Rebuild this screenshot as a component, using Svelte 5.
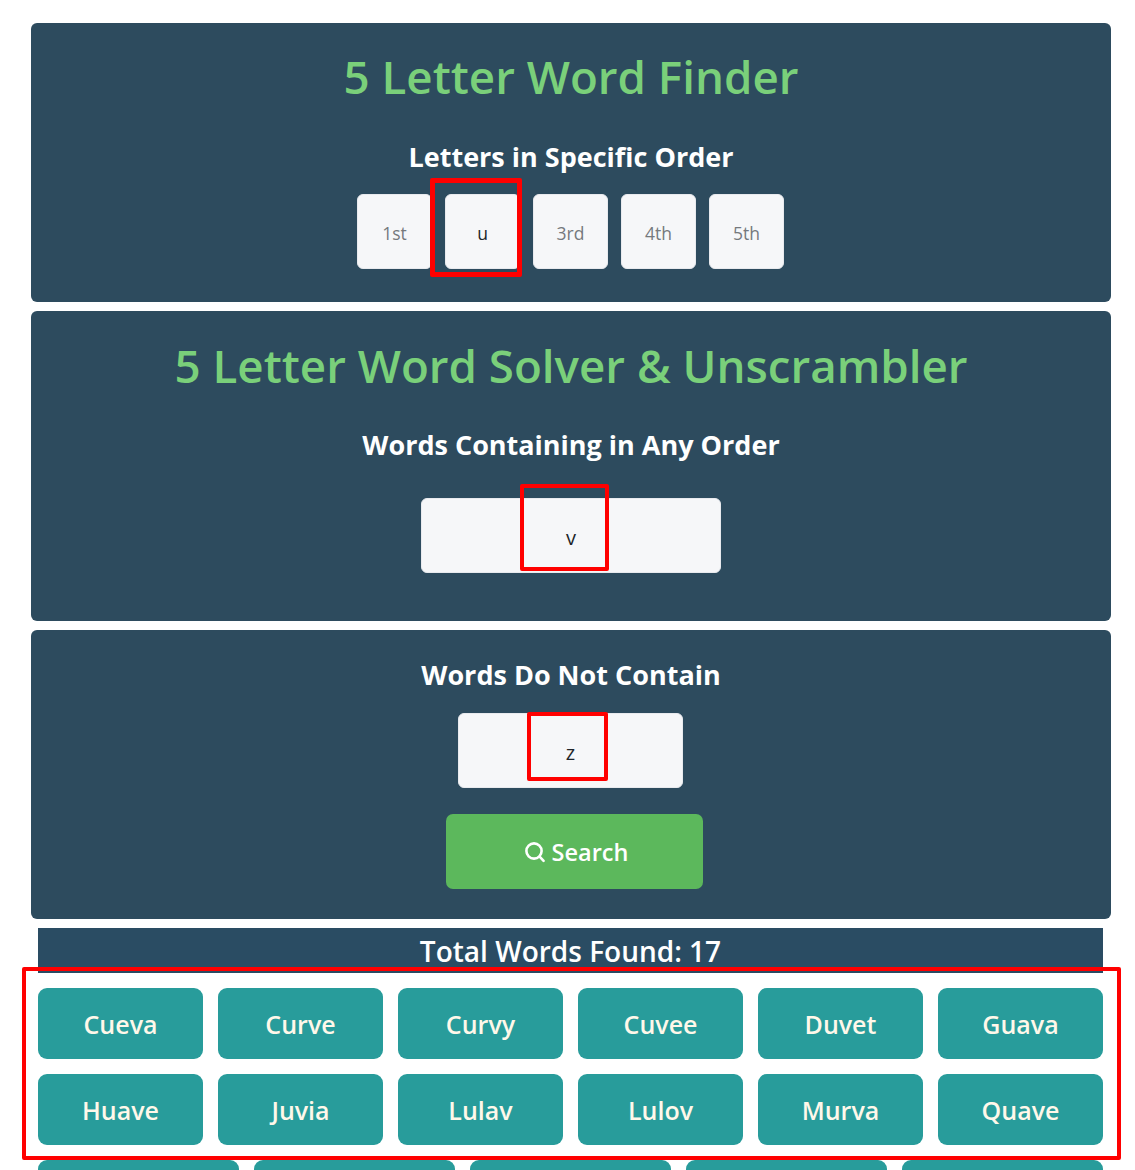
<script>
  const order = [
    { placeholder: "1st", value: "" },
    { placeholder: "2nd", value: "u" },
    { placeholder: "3rd", value: "" },
    { placeholder: "4th", value: "" },
    { placeholder: "5th", value: "" },
  ];
  const found = ["Cueva", "Curve", "Curvy", "Cuvee", "Duvet", "Guava", "Huave", "Juvia", "Lulav", "Lulov", "Murva", "Quave"];
  // third row is cut by the window, only the tile tops show
  const cut = [1, 2, 3, 4, 5];
</script>

<div class="page">
  <section class="panel first">
    <h1>5 Letter Word Finder</h1>
    <h2>Letters in Specific Order</h2>
    <div class="letters">
      {#each order as o}
        <input class="box" placeholder={o.placeholder} value={o.value} />
      {/each}
    </div>
  </section>

  <section class="panel second">
    <h1>5 Letter Word Solver &amp; Unscrambler</h1>
    <h2>Words Containing in Any Order</h2>
    <input class="box wide" value="v" />
  </section>

  <section class="panel third">
    <h2>Words Do Not Contain</h2>
    <input class="box mid" value="z" />
    <button class="search">
      <svg width="22" height="22" viewBox="0 0 22 22" fill="none" stroke="currentColor" stroke-width="2.6" stroke-linecap="round">
        <circle cx="10" cy="10" r="7.6" />
        <path d="M15.6 15.6L19.6 19.8" />
      </svg>
      Search
    </button>
  </section>

  <div class="total">Total Words Found: 17</div>

  <div class="words">
    {#each found as w}
      <a class="word" href="#top">{w}</a>
    {/each}
  </div>
  <div class="words five">
    {#each cut as n (n)}
      <span class="word"></span>
    {/each}
  </div>

  <div class="mark m1"></div>
  <div class="mark m2"></div>
  <div class="mark m3"></div>
  <div class="mark m4"></div>
</div>

<style>
  :global(body) {
    margin: 0;
    background: #fff;
  }

  .page {
    position: relative;
    height: 1170px;
    overflow: hidden;
    padding: 23px 24px 0 31px;
    box-sizing: border-box;
    font-family: "Open Sans", "Noto Sans", sans-serif;
  }

  .panel {
    background: #2d4b5e;
    border-radius: 6px;
    margin-bottom: 9px;
    display: flex;
    flex-direction: column;
    align-items: center;
    box-sizing: border-box;
  }

  .first {
    height: 279px;
    padding-top: 20px;
  }

  .second {
    height: 310px;
    padding-top: 21px;
  }

  .third {
    height: 289px;
    padding-top: 26px;
  }

  h1 {
    margin: 0;
    color: #7ad07a;
    font-size: 45.7px;
    line-height: 66px;
    font-weight: 600;
  }

  h2 {
    margin: 0;
    color: #fff;
    font-size: 27px;
    line-height: 38px;
    font-weight: 700;
  }

  .first h2 {
    margin-top: 29px;
  }

  .second h2 {
    margin-top: 28px;
  }

  .letters {
    display: flex;
    gap: 13px;
    margin: 18px 1px 0 0;
  }

  .box {
    width: 75px;
    height: 75px;
    box-sizing: border-box;
    border: 1px solid #e8eaee;
    border-radius: 6px;
    background: #f6f7f9;
    padding: 3px 0 0;
    text-align: center;
    font-family: inherit;
    font-size: 17.5px;
    color: #212529;
  }

  .box::placeholder {
    color: #75797d;
    opacity: 1;
  }

  .wide {
    width: 300px;
    margin-top: 34px;
    padding-top: 3px;
    font-size: 20px;
  }

  .mid {
    width: 225px;
    margin: 19px 1px 0 0;
    padding-top: 4px;
    font-size: 20px;
  }

  .search {
    width: 257px;
    height: 75px;
    margin: 26px 0 0 6px;
    border: none;
    border-radius: 7px;
    background: #5cb85c;
    color: #fff;
    font-family: inherit;
    font-size: 23.5px;
    font-weight: 600;
    display: flex;
    align-items: center;
    justify-content: center;
    gap: 6px;
    padding: 0 0 0 4px;
  }

  .total {
    margin: 0 8px 0 7px;
    height: 45px;
    background: #2a4c63;
    color: #fff;
    text-align: center;
    font-size: 28px;
    line-height: 47px;
    font-weight: 600;
  }

  .words {
    display: grid;
    grid-template-columns: repeat(6, 165px);
    gap: 15px;
    margin: 15px 8px 0 7px;
  }

  .five {
    grid-template-columns: repeat(5, 201px);
  }

  .word {
    height: 71px;
    border-radius: 9px;
    background: #289c9b;
    color: #fff8ea;
    text-decoration: none;
    font-size: 25px;
    font-weight: 600;
    display: flex;
    align-items: center;
    justify-content: center;
  }

  /* red annotations drawn over the page */
  .mark {
    position: absolute;
    box-sizing: border-box;
    border: 4px solid #f00;
    border-radius: 2px;
  }

  .m1 {
    left: 430px;
    top: 178px;
    width: 92px;
    height: 99px;
    border-width: 5px;
  }

  .m2 {
    left: 520px;
    top: 484px;
    width: 89px;
    height: 87px;
  }

  .m3 {
    left: 527px;
    top: 712px;
    width: 81px;
    height: 69px;
  }

  .m4 {
    left: 22px;
    top: 967px;
    width: 1099px;
    height: 193px;
  }
</style>
